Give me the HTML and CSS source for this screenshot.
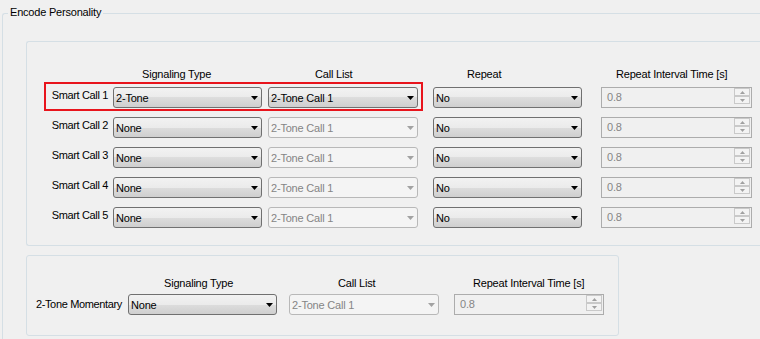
FILE: index.html
```html
<!DOCTYPE html>
<html lang="en">
<head>
    <meta charset="UTF-8">
    <title>Encode Personality</title>
    <link rel="stylesheet" href="styles.css">
</head>
<body>
    <div class="group">
        <div class="group-title">Encode Personality</div>
        <div class="group-body">

            <div class="box box-smart">
                <div class="grid grid-smart">
                    <div></div>
                    <div class="head sig">Signaling Type</div>
                    <div class="head call">Call List</div>
                    <div class="head rep">Repeat</div>
                    <div class="head int">Repeat Interval Time [s]</div>

                    <div class="label">Smart Call 1</div>
                    <div class="combo"><span class="combo-text">2-Tone</span><svg class="arrow" width="7" height="4"><polygon points="0,0 7,0 3.5,4"/></svg></div>
                    <div class="combo wide"><span class="combo-text">2-Tone Call 1</span><svg class="arrow" width="7" height="4"><polygon points="0,0 7,0 3.5,4"/></svg></div>
                    <div class="combo"><span class="combo-text">No</span><svg class="arrow" width="7" height="4"><polygon points="0,0 7,0 3.5,4"/></svg></div>
                    <div class="spin"><span class="spin-text">0.8</span><div class="spin-btns"><div class="spin-btn"><svg width="5" height="3"><polygon points="0,3 5,3 2.5,0"/></svg></div><div class="spin-btn"><svg width="5" height="3"><polygon points="0,0 5,0 2.5,3"/></svg></div></div></div>

                    <div class="label">Smart Call 2</div>
                    <div class="combo"><span class="combo-text">None</span><svg class="arrow" width="7" height="4"><polygon points="0,0 7,0 3.5,4"/></svg></div>
                    <div class="combo wide disabled"><span class="combo-text">2-Tone Call 1</span><svg class="arrow" width="7" height="4"><polygon points="0,0 7,0 3.5,4"/></svg></div>
                    <div class="combo"><span class="combo-text">No</span><svg class="arrow" width="7" height="4"><polygon points="0,0 7,0 3.5,4"/></svg></div>
                    <div class="spin"><span class="spin-text">0.8</span><div class="spin-btns"><div class="spin-btn"><svg width="5" height="3"><polygon points="0,3 5,3 2.5,0"/></svg></div><div class="spin-btn"><svg width="5" height="3"><polygon points="0,0 5,0 2.5,3"/></svg></div></div></div>

                    <div class="label">Smart Call 3</div>
                    <div class="combo"><span class="combo-text">None</span><svg class="arrow" width="7" height="4"><polygon points="0,0 7,0 3.5,4"/></svg></div>
                    <div class="combo wide disabled"><span class="combo-text">2-Tone Call 1</span><svg class="arrow" width="7" height="4"><polygon points="0,0 7,0 3.5,4"/></svg></div>
                    <div class="combo"><span class="combo-text">No</span><svg class="arrow" width="7" height="4"><polygon points="0,0 7,0 3.5,4"/></svg></div>
                    <div class="spin"><span class="spin-text">0.8</span><div class="spin-btns"><div class="spin-btn"><svg width="5" height="3"><polygon points="0,3 5,3 2.5,0"/></svg></div><div class="spin-btn"><svg width="5" height="3"><polygon points="0,0 5,0 2.5,3"/></svg></div></div></div>

                    <div class="label">Smart Call 4</div>
                    <div class="combo"><span class="combo-text">None</span><svg class="arrow" width="7" height="4"><polygon points="0,0 7,0 3.5,4"/></svg></div>
                    <div class="combo wide disabled"><span class="combo-text">2-Tone Call 1</span><svg class="arrow" width="7" height="4"><polygon points="0,0 7,0 3.5,4"/></svg></div>
                    <div class="combo"><span class="combo-text">No</span><svg class="arrow" width="7" height="4"><polygon points="0,0 7,0 3.5,4"/></svg></div>
                    <div class="spin"><span class="spin-text">0.8</span><div class="spin-btns"><div class="spin-btn"><svg width="5" height="3"><polygon points="0,3 5,3 2.5,0"/></svg></div><div class="spin-btn"><svg width="5" height="3"><polygon points="0,0 5,0 2.5,3"/></svg></div></div></div>

                    <div class="label">Smart Call 5</div>
                    <div class="combo"><span class="combo-text">None</span><svg class="arrow" width="7" height="4"><polygon points="0,0 7,0 3.5,4"/></svg></div>
                    <div class="combo wide disabled"><span class="combo-text">2-Tone Call 1</span><svg class="arrow" width="7" height="4"><polygon points="0,0 7,0 3.5,4"/></svg></div>
                    <div class="combo"><span class="combo-text">No</span><svg class="arrow" width="7" height="4"><polygon points="0,0 7,0 3.5,4"/></svg></div>
                    <div class="spin"><span class="spin-text">0.8</span><div class="spin-btns"><div class="spin-btn"><svg width="5" height="3"><polygon points="0,3 5,3 2.5,0"/></svg></div><div class="spin-btn"><svg width="5" height="3"><polygon points="0,0 5,0 2.5,3"/></svg></div></div></div>
                </div>
                <!-- highlight round the first row -->
                <div class="highlight"></div>
            </div>

            <div class="box box-momentary">
                <div class="grid grid-momentary">
                    <div></div>
                    <div class="head sig2">Signaling Type</div>
                    <div class="head call2">Call List</div>
                    <div class="head int2">Repeat Interval Time [s]</div>

                    <div class="label label-mom">2-Tone Momentary</div>
                    <div class="combo"><span class="combo-text">None</span><svg class="arrow" width="7" height="4"><polygon points="0,0 7,0 3.5,4"/></svg></div>
                    <div class="combo wide disabled"><span class="combo-text">2-Tone Call 1</span><svg class="arrow" width="7" height="4"><polygon points="0,0 7,0 3.5,4"/></svg></div>
                    <div class="spin spin-mom"><span class="spin-text">0.8</span><div class="spin-btns"><div class="spin-btn"><svg width="5" height="3"><polygon points="0,3 5,3 2.5,0"/></svg></div><div class="spin-btn"><svg width="5" height="3"><polygon points="0,0 5,0 2.5,3"/></svg></div></div></div>
                </div>
            </div>

        </div>
    </div>
</body>
</html>
```

FILE: styles.css
```css
html, body {
    overflow: hidden;
}
body {
    margin: 0;
    background-color: #f0f0f0;
    font-family: 'Liberation Sans', Arial, sans-serif;
    font-size: 11px;
    letter-spacing: -0.2px;
    line-height: 13px;
    color: #000;
}
/* outer group box runs off the right and bottom edge of the window */
.group {
    margin: 13px 0 0 2px;
    width: 758px;
    height: 326px;
    border: 1px solid #d5dfe5;
    border-right: none;
    border-bottom: none;
    border-radius: 3px 0 0 0;
    box-sizing: border-box;
}
.group-title {
    width: max-content;
    margin: -8px 0 0 5px;
    padding: 0 2px;
    background: #f0f0f0;
    line-height: 13px;
}
.group-body {
    padding: 22px 0 0 23px;
}
.box {
    position: relative;
    border: 1px solid #d5dfe5;
    border-radius: 3px;
}
.box-smart {
    width: 733px;
    padding: 26px 0 17px;
    border-right: none;
    border-radius: 3px 0 0 3px;
}
.box-momentary {
    width: 591px;
    margin-top: 9px;
    padding: 21px 0 20px;
}
.grid {
    display: grid;
}
.grid-smart {
    grid-template-columns: 86px 155px 165px 168px 151px;
    grid-template-rows: 10px;
    grid-auto-rows: 21px;
    row-gap: 9px;
}
.grid-momentary {
    grid-template-columns: 101px 161px 165px 150px;
    grid-template-rows: 13px;
    grid-auto-rows: 21px;
    row-gap: 4px;
}
.head {
    white-space: nowrap;
    line-height: 13px;
}
.sig { padding-left: 29px; }
.call { padding-left: 47px; }
.rep { padding-left: 34px; }
.int { padding-left: 15px; }
.sig2 { padding-left: 36px; }
.call2 { padding-left: 49px; }
.int2 { padding-left: 19px; }
.label {
    text-align: right;
    white-space: nowrap;
    letter-spacing: -0.35px;
    padding: 2px 5px 0 0;
}
.label-mom {
    padding: 4px 6px 0 0;
}
.combo {
    width: 149px;
    height: 21px;
    box-sizing: border-box;
    display: flex;
    align-items: center;
    padding: 0 3px 0 2px;
    border: 1px solid #707070;
    border-radius: 3px;
    background: linear-gradient(#f2f2f2, #ebebeb 50%, #dddddd 50%, #cfcfcf);
}
.combo.wide {
    width: 150px;
}
.combo-text {
    flex: 1;
    padding-top: 2px;
    white-space: nowrap;
}
.arrow {
    fill: #000;
    margin-top: 1px;
}
.combo.disabled {
    border-color: #b8b8b8;
    background: #f4f4f4;
    color: #858585;
}
.combo.disabled .arrow {
    fill: #a2a2a2;
}
.spin {
    width: 151px;
    height: 21px;
    box-sizing: border-box;
    display: flex;
    border: 1px solid #acacac;
    background: #f0f0f0;
}
.spin-mom {
    width: 150px;
}
.spin-text {
    flex: 1;
    padding: 3px 0 0 5px;
    color: #858585;
}
.spin-btns {
    display: flex;
    flex-direction: column;
    width: 16px;
    margin-right: 1px;
}
.spin-btn {
    height: 8px;
    box-sizing: border-box;
    display: flex;
    align-items: center;
    justify-content: center;
    border: 1px solid #c9c9c9;
    background: #f3f3f3;
}
.spin-btn svg {
    fill: #a0a0a0;
}
.highlight {
    position: absolute;
    left: 17px;
    top: 40px;
    width: 379px;
    height: 29px;
    box-sizing: border-box;
    border: 2px solid #e8141c;
}
```
